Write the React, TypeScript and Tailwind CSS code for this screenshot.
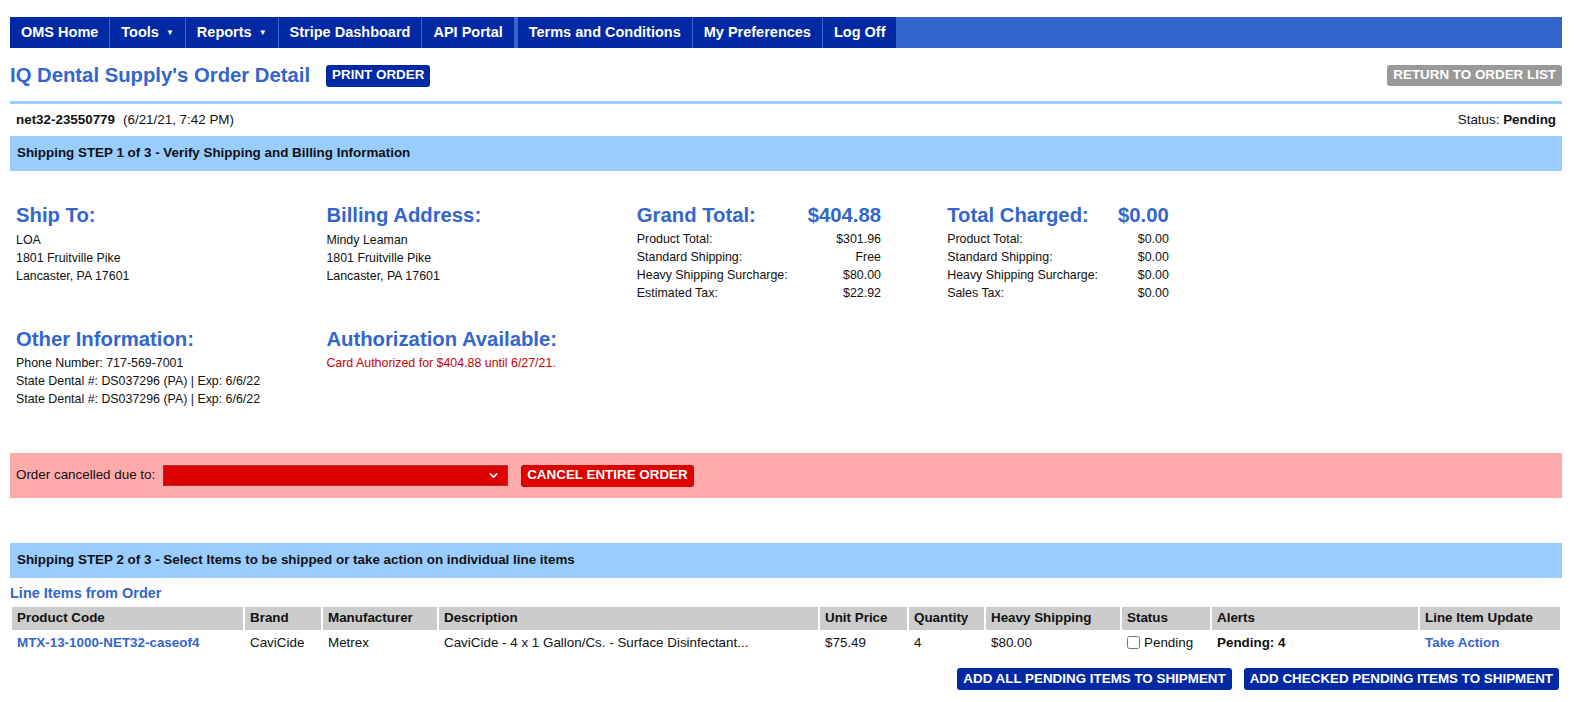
import { ChevronDown } from 'lucide-react'

const navItems = [
  { label: 'OMS Home' },
  { label: 'Tools', menu: true },
  { label: 'Reports', menu: true },
  { label: 'Stripe Dashboard' },
  { label: 'API Portal' },
  { label: 'Terms and Conditions', spaced: true },
  { label: 'My Preferences' },
  { label: 'Log Off' },
]

const grandTotal = [
  ['Product Total:', '$301.96'],
  ['Standard Shipping:', 'Free'],
  ['Heavy Shipping Surcharge:', '$80.00'],
  ['Estimated Tax:', '$22.92'],
]

const charged = [
  ['Product Total:', '$0.00'],
  ['Standard Shipping:', '$0.00'],
  ['Heavy Shipping Surcharge:', '$0.00'],
  ['Sales Tax:', '$0.00'],
]

const columns = [
  { label: 'Product Code', w: 'w-[231px]' },
  { label: 'Brand', w: 'w-[76px]' },
  { label: 'Manufacturer', w: 'w-[114px]' },
  { label: 'Description', w: 'w-[379px]' },
  { label: 'Unit Price', w: 'w-[87px]' },
  { label: 'Quantity', w: 'w-[75px]' },
  { label: 'Heavy Shipping', w: 'w-[134px]' },
  { label: 'Status', w: 'w-[88px]' },
  { label: 'Alerts', w: 'w-[206px]' },
  { label: 'Line Item Update', w: 'w-[140px]' },
]

function Heading({ children }: { children: React.ReactNode }) {
  return (
    <h2 className="text-[20.3px] leading-[24px] font-bold text-[#3366cc]">
      {children}
    </h2>
  )
}

function TotalsTable({
  title,
  amount,
  rows,
}: {
  title: string
  amount: string
  rows: string[][]
}) {
  return (
    <div className="grid w-fit grid-cols-[auto_auto] gap-x-5">
      <div className="pb-[3px] text-[20.3px] leading-[24px] font-bold text-[#3366cc]">
        {title}
      </div>
      <div className="pb-[3px] text-right text-[20.3px] leading-[24px] font-bold text-[#3366cc]">
        {amount}
      </div>
      {rows.map(([label, value]) => (
        <div key={label} className="contents">
          <div className="text-[12.4px] leading-[18px]">{label}</div>
          <div className="text-right text-[12.4px] leading-[18px]">{value}</div>
        </div>
      ))}
    </div>
  )
}

function StepBar({ children }: { children: React.ReactNode }) {
  return (
    <div className="flex h-[35px] items-center bg-[#99ccff] px-[7px] text-[13.4px] font-bold">
      {children}
    </div>
  )
}

export default function App(): JSX.Element {
  return (
    <div
      className="min-h-[702px] bg-white pt-[17px] text-[#111]"
      style={{ fontFamily: '"Liberation Sans", Arial, sans-serif' }}
    >
      <div className="ml-[10px] w-[1552px]">
        {/* top nav */}
        <nav className="flex h-[31px] gap-px bg-[#3366cc]">
          {navItems.map((item) => (
            <a
              key={item.label}
              className={`flex items-center gap-[7px] bg-[#0029a3] px-[11px] text-[14.5px] font-bold text-white ${
                item.spaced ? 'ml-[3px]' : ''
              }`}
            >
              {item.label}
              {item.menu && <span className="text-[8px]">▼</span>}
            </a>
          ))}
        </nav>

        <div className="mt-[16px] flex h-[23px] items-center justify-between">
          <div className="flex items-center gap-[16px]">
            <h1 className="text-[20.3px] font-bold text-[#3366cc]">
              IQ Dental Supply's Order Detail
            </h1>
            <button className="h-[22px] rounded-[3px] bg-[#0029a3] px-[6px] text-[13.4px] font-bold text-white">
              PRINT ORDER
            </button>
          </div>
          <button className="h-[21px] rounded-[3px] bg-[#999999] px-[6px] text-[13.4px] font-bold text-white">
            RETURN TO ORDER LIST
          </button>
        </div>

        <div className="mt-[14px] h-[3px] bg-[#99ccff]" />

        <div className="flex h-[32px] items-center justify-between px-[6px] text-[13.4px]">
          <div>
            <b>net32-23550779</b>
            <span className="ml-[8px]">(6/21/21, 7:42 PM)</span>
          </div>
          <div>
            Status: <b>Pending</b>
          </div>
        </div>

        <StepBar>Shipping STEP 1 of 3 - Verify Shipping and Billing Information</StepBar>

        <div className="grid grid-cols-5 gap-y-[25px] pt-[32px]">
          <div className="px-[6px]">
            <Heading>Ship To:</Heading>
            <div className="mt-[4px] text-[12.4px] leading-[18px]">
              <div>LOA</div>
              <div>1801 Fruitville Pike</div>
              <div>Lancaster, PA 17601</div>
            </div>
          </div>
          <div className="px-[6px]">
            <Heading>Billing Address:</Heading>
            <div className="mt-[4px] text-[12.4px] leading-[18px]">
              <div>Mindy Leaman</div>
              <div>1801 Fruitville Pike</div>
              <div>Lancaster, PA 17601</div>
            </div>
          </div>
          <div className="px-[6px]">
            <TotalsTable title="Grand Total:" amount="$404.88" rows={grandTotal} />
          </div>
          <div className="px-[6px]">
            <TotalsTable title="Total Charged:" amount="$0.00" rows={charged} />
          </div>
          <div />
          <div className="px-[6px]">
            <Heading>Other Information:</Heading>
            <div className="mt-[3px] text-[12.4px] leading-[18px]">
              <div>Phone Number: 717-569-7001</div>
              <div>State Dental #: DS037296 (PA) | Exp: 6/6/22</div>
              <div>State Dental #: DS037296 (PA) | Exp: 6/6/22</div>
            </div>
          </div>
          <div className="px-[6px]">
            <Heading>Authorization Available:</Heading>
            <div className="mt-[3px] text-[12.4px] leading-[18px] text-[#cc0000]">
              Card Authorized for $404.88 until 6/27/21.
            </div>
          </div>
        </div>

        {/* cancel bar */}
        <div className="mt-[45px] flex h-[45px] items-center bg-[#ffaaaa] px-[6px] text-[13.4px]">
          <span>Order cancelled due to:</span>
          <div className="relative ml-[8px] h-[21px] w-[345px] border border-[#a33] bg-[#dd0000]">
            <ChevronDown
              className="absolute top-[3px] right-[7px] text-white"
              size={13}
              strokeWidth={3}
            />
          </div>
          <button className="ml-[13px] h-[22px] rounded-[3px] bg-[#dd0000] px-[6px] text-[13.4px] font-bold text-white">
            CANCEL ENTIRE ORDER
          </button>
        </div>

        <div className="mt-[45px]">
          <StepBar>
            Shipping STEP 2 of 3 - Select Items to be shipped or take action on
            individual line items
          </StepBar>
        </div>

        <div className="flex h-[29px] items-center pt-[3px] text-[14.5px] font-bold text-[#3366cc]">
          Line Items from Order
        </div>

        <table className="-mt-[2px] w-[1552px] table-fixed border-separate border-spacing-[2px] text-[13.4px]">
          <colgroup>
            {columns.map((c) => (
              <col key={c.label} className={c.w} />
            ))}
          </colgroup>
          <thead>
            <tr className="h-[23px] bg-[#cccccc]">
              {columns.map((c) => (
                <th key={c.label} className="px-[5px] text-left font-bold">
                  {c.label}
                </th>
              ))}
            </tr>
          </thead>
          <tbody>
            <tr className="h-[22px]">
              <td className="px-[5px] font-bold text-[#3366cc]">
                MTX-13-1000-NET32-caseof4
              </td>
              <td className="px-[5px]">CaviCide</td>
              <td className="px-[5px]">Metrex</td>
              <td className="truncate px-[5px]">
                CaviCide - 4 x 1 Gallon/Cs. - Surface Disinfectant...
              </td>
              <td className="px-[5px]">$75.49</td>
              <td className="px-[5px]">4</td>
              <td className="px-[5px]">$80.00</td>
              <td className="px-[5px]">
                <label className="flex items-center gap-[4px]">
                  <input type="checkbox" className="m-0 h-[13px] w-[13px]" />
                  Pending
                </label>
              </td>
              <td className="px-[5px] font-bold">Pending: 4</td>
              <td className="px-[5px] font-bold text-[#3366cc]">Take Action</td>
            </tr>
          </tbody>
        </table>

        <div className="mt-[12px] flex justify-end gap-[12px] pr-[3px]">
          <button className="h-[22px] rounded-[3px] bg-[#0029a3] px-[6px] text-[13.4px] font-bold text-white">
            ADD ALL PENDING ITEMS TO SHIPMENT
          </button>
          <button className="h-[22px] rounded-[3px] bg-[#0029a3] px-[6px] text-[13.4px] font-bold text-white">
            ADD CHECKED PENDING ITEMS TO SHIPMENT
          </button>
        </div>
      </div>
    </div>
  )
}
